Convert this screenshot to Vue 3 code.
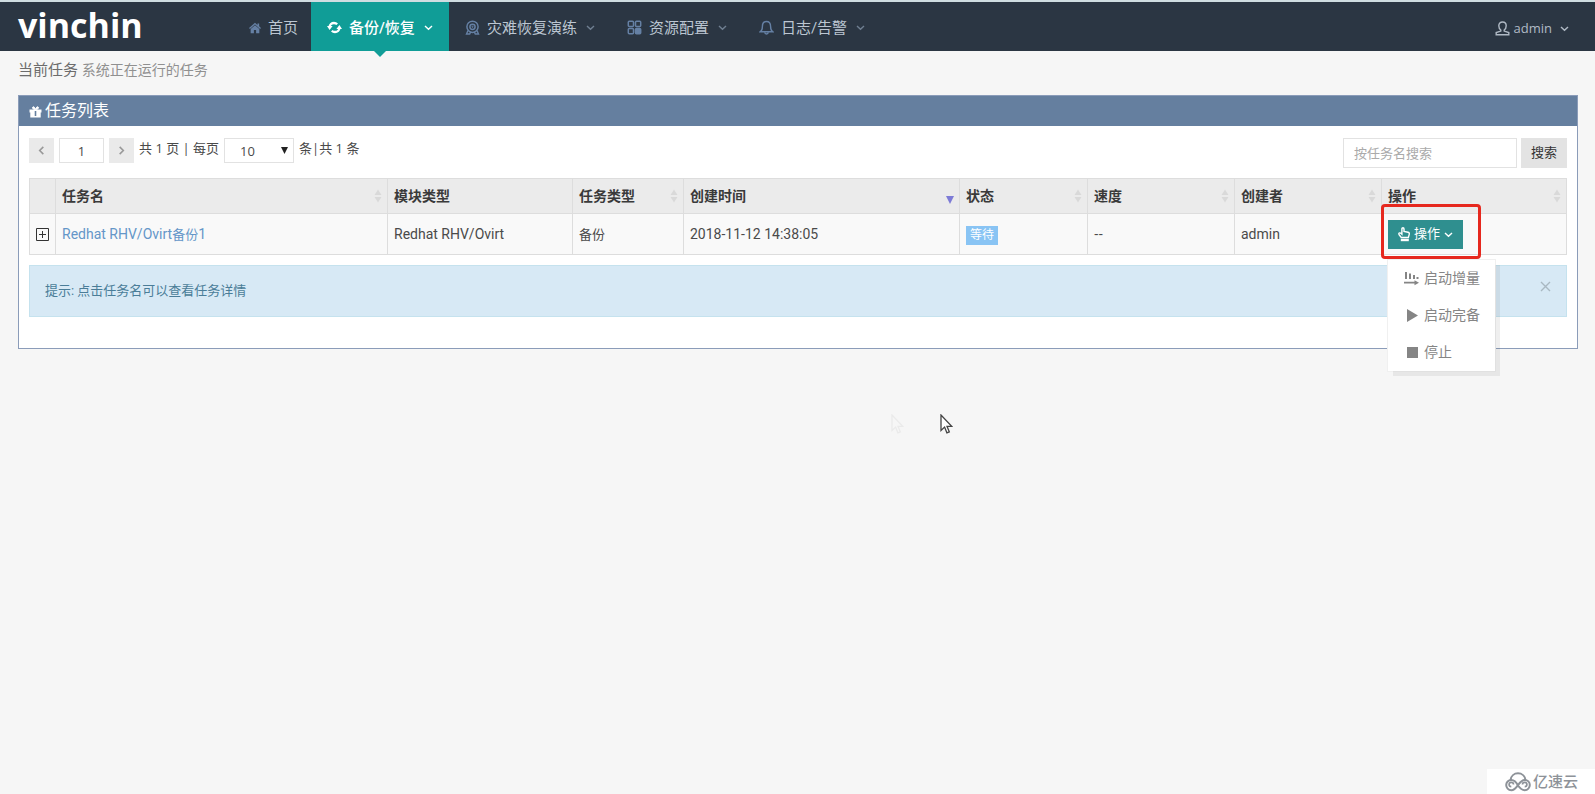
<script setup>
import { ref } from 'vue'

const nav = [
  { label: '首页', icon: 'home', plain: true },
  { label: '备份/恢复', icon: 'sync', active: true },
  { label: '灾难恢复演练', icon: 'target' },
  { label: '资源配置', icon: 'grid' },
  { label: '日志/告警', icon: 'bell' },
]

const columns = [
  { key: 'name', label: '任务名', sort: 'both' },
  { key: 'module', label: '模块类型' },
  { key: 'type', label: '任务类型', sort: 'both' },
  { key: 'created', label: '创建时间', sort: 'desc' },
  { key: 'state', label: '状态', sort: 'both' },
  { key: 'speed', label: '速度', sort: 'both' },
  { key: 'owner', label: '创建者', sort: 'both' },
  { key: 'action', label: '操作', sort: 'both' },
]

const page = ref('1')
const pageSize = ref('10')
const keyword = ref('')
const menuOpen = ref(true)
const tipOpen = ref(true)
</script>

<template>
  <div class="page">
    <header class="topbar">
      <a class="logo" href="#">vinchin</a>
      <nav class="nav">
        <a
          v-for="item in nav"
          :key="item.label"
          href="#"
          class="nav-link"
          :class="{ active: item.active, plain: item.plain }"
        >
          <svg v-if="item.icon === 'home'" class="nav-icon home" viewBox="0 0 13 13">
            <path d="M6.500.8 0 6.500l1 1.100 5.500-4.800L12 7.600l1-1.100-2-1.800V1.500H9.200v1.700z" fill="currentColor" />
            <path d="M1.800 7.700 6.500 3.500l4.700 4.200v4.600H7.700V8.800H5.300v3.500H1.800z" fill="currentColor" />
          </svg>
          <svg v-else-if="item.icon === 'sync'" class="nav-icon" viewBox="0 0 15 15">
            <path d="M2.600 7.300C2.600 4.600 4.700 3 7 3c1.300 0 2.300.4 3.200 1.300" fill="none" stroke="currentColor" stroke-width="2.300" />
            <path d="M12.400 7.700c0 2.700-2.100 4.300-4.400 4.300-1.300 0-2.300-.4-3.200-1.300" fill="none" stroke="currentColor" stroke-width="2.300" />
            <path d="M0 6h5.600L2.600 10zM15 9H9.400l3-4z" fill="currentColor" />
          </svg>
          <svg v-else-if="item.icon === 'target'" class="nav-icon" viewBox="0 0 15 15" fill="none" stroke="currentColor">
            <circle cx="7.500" cy="6.800" r="5.600" stroke-width="1.500" />
            <circle cx="7.500" cy="6.800" r="2.600" stroke-width="1.500" />
            <circle cx="7.500" cy="6.800" r=".6" stroke-width="1" />
            <path d="M3 10.500 1.500 14h3.200l1-2M12 10.500l1.500 3.500h-3.200l-1-2" stroke-width="1.400" />
          </svg>
          <svg v-else-if="item.icon === 'grid'" class="nav-icon" viewBox="0 0 15 15" fill="none" stroke="currentColor" stroke-width="1.500">
            <rect x="1.300" y="1.300" width="5.200" height="5.200" rx="1" />
            <rect x="8.500" y="1.300" width="5.200" height="5.200" rx="1" />
            <rect x="1.300" y="8.500" width="5.200" height="5.200" rx="1" />
            <rect x="8.500" y="8.500" width="5.200" height="5.200" rx="1" fill="currentColor" />
          </svg>
          <svg v-else class="nav-icon" viewBox="0 0 15 15" fill="none" stroke="currentColor" stroke-width="1.400">
            <path d="M1.500 11.700c1.500-1 1.900-2.300 1.900-5.200C3.400 3.600 5 1.500 7.500 1.500s4.100 2.100 4.100 5c0 2.900.4 4.200 1.900 5.200z" />
            <path d="M5.800 12.200c0 2.300 3.400 2.300 3.400 0" />
          </svg>
          <span>{{ item.label }}</span>
          <svg v-if="!item.plain" class="chevron" viewBox="0 0 9 9">
            <path d="M1 3l3.500 3.300L8 3" fill="none" stroke="currentColor" stroke-width="1.400" />
          </svg>
        </a>
      </nav>
      <a class="user" href="#">
        <svg class="user-icon" viewBox="0 0 15 15" fill="none" stroke="currentColor" stroke-width="1.400">
          <path d="M5.800 9C4.300 8 3.800 6.400 3.800 4.800c0-2.300 1.500-3.800 3.700-3.800s3.700 1.500 3.700 3.800c0 1.600-.5 3.200-2 4.200v1.100l4.600 1.500v2.200H1.200v-2.200l4.600-1.500z" />
        </svg>
        <span>admin</span>
        <svg class="chevron" viewBox="0 0 9 9">
          <path d="M1 3l3.500 3.300L8 3" fill="none" stroke="currentColor" stroke-width="1.400" />
        </svg>
      </a>
    </header>

    <main class="main">
      <h1 class="heading">当前任务 <small>系统正在运行的任务</small></h1>

      <section class="panel">
        <h2 class="panel-title">
          <svg class="gift" viewBox="0 0 13 13">
            <path d="M.5 4.500h12v3H.5zM1.300 7h10.400v5.500H1.300z" fill="currentColor" />
            <path d="M6.500 4.500C2.800 4.500 3 1.800 4.500 1.800c1.200 0 2 2.700 2 2.700s.8-2.700 2-2.700c1.500 0 1.700 2.700-2 2.700z" fill="currentColor" stroke="currentColor" />
            <path d="M6.500 6v5" stroke="#657f9f" stroke-width="1.600" />
          </svg>
          任务列表
        </h2>

        <div class="panel-body">
          <div class="toolbar">
            <div class="pager">
              <button class="page-btn" type="button" aria-label="上一页">
                <svg viewBox="0 0 9 9"><path d="M6 1.500 3 4.500l3 3" fill="none" stroke="currentColor" stroke-width="1.300" /></svg>
              </button>
              <input v-model="page" class="page-input" type="text" aria-label="页码" />
              <button class="page-btn" type="button" aria-label="下一页">
                <svg viewBox="0 0 9 9"><path d="m3 1.500 3 3-3 3" fill="none" stroke="currentColor" stroke-width="1.300" /></svg>
              </button>
              <label class="pager-text" for="page-size">共 1 页 | 每页</label>
              <span class="select-wrap">
                <select id="page-size" v-model="pageSize">
                  <option>10</option>
                  <option>20</option>
                  <option>50</option>
                </select>
                <svg class="caret" viewBox="0 0 7 7"><path d="M0 0h7L3.500 7z" fill="#222" /></svg>
              </span>
              <span class="pager-text">条|共 1 条</span>
            </div>
            <form class="search" @submit.prevent>
              <input v-model="keyword" type="text" placeholder="按任务名搜索" aria-label="按任务名搜索" />
              <button type="submit">搜索</button>
            </form>
          </div>

          <table class="tasks">
            <colgroup>
              <col class="w-expand" />
              <col v-for="c in columns" :key="c.key" :class="'w-' + c.key" />
            </colgroup>
            <thead>
              <tr>
                <th aria-label="展开"></th>
                <th v-for="c in columns" :key="c.key">
                  <div class="th">
                    <span>{{ c.label }}</span>
                    <svg v-if="c.sort" class="sort" viewBox="0 0 8 16">
                      <path v-if="c.sort === 'both'" d="M4 1.500 7.500 7h-7zM4 14.500.5 9h7z" fill="#d9d9d9" />
                      <path v-else d="M0 8h8l-4 8z" fill="#7d7bd6" />
                    </svg>
                  </div>
                </th>
              </tr>
            </thead>
            <tbody>
              <tr>
                <td class="expand">
                  <button type="button" aria-label="展开">
                    <svg viewBox="0 0 13 13" fill="none" stroke="#333">
                      <path d="M.5.5h12v12H.5zM3 6.500h7M6.500 3v7" />
                    </svg>
                  </button>
                </td>
                <td><a class="task-link" href="#">Redhat RHV/Ovirt<span class="cn">备份</span>1</a></td>
                <td>Redhat RHV/Ovirt</td>
                <td><span class="cn">备份</span></td>
                <td>2018-11-12 14:38:05</td>
                <td><span class="badge">等待</span></td>
                <td class="speed">--</td>
                <td>admin</td>
                <td>
                  <div class="action">
                    <button class="action-btn" type="button" @click="menuOpen = !menuOpen">
                      <svg class="hand" viewBox="0 0 12 15" fill="none" stroke="currentColor" stroke-width="1.400">
                        <path d="M3.200 10.500C2.600 9.300.8 8 .8 6.800c0-1 1.300-1.300 2.300-.4l.8.700V1.900c0-1.500 2.100-1.500 2.100 0v2.600l4.100.8c1 .2 1.300.8 1.200 1.700-.1 1.300-.8 2.200-.9 3.500z" />
                        <path d="M2.800 13h8" stroke-width="2.400" />
                      </svg>
                      <span>操作</span>
                      <svg class="chevron" viewBox="0 0 9 9">
                        <path d="M1 3l3.500 3.300L8 3" fill="none" stroke="currentColor" stroke-width="1.400" />
                      </svg>
                    </button>
                    <span class="marker"></span>
                    <ul v-if="menuOpen" class="menu">
                      <li>
                        <button type="button">
                          <svg viewBox="0 0 15 15" fill="currentColor">
                            <path d="M1 1h2v7H1zM5 2.500h2V8H5zM9 4h2v4H9zM12.500 6h2v2h-2zM0 10.800h10.500V9.200L15 11.700l-4.500 2.500v-1.600H0z" />
                          </svg>
                          启动增量
                        </button>
                      </li>
                      <li>
                        <button type="button">
                          <svg viewBox="0 0 15 15" fill="currentColor"><path d="M3 1v13l11-6.500z" /></svg>
                          启动完备
                        </button>
                      </li>
                      <li>
                        <button type="button">
                          <svg viewBox="0 0 15 15" fill="currentColor"><path d="M3 2h11v11H3z" /></svg>
                          停止
                        </button>
                      </li>
                    </ul>
                  </div>
                </td>
              </tr>
            </tbody>
          </table>

          <div v-if="tipOpen" class="tip">
            <span>提示: 点击任务名可以查看任务详情</span>
            <button type="button" aria-label="关闭" @click="tipOpen = false">
              <svg viewBox="0 0 11 11"><path d="m1 1 9 9M10 1l-9 9" stroke="currentColor" stroke-width="1.400" /></svg>
            </button>
          </div>
        </div>
      </section>
    </main>

    <svg class="cursor ghost" viewBox="0 0 13 21">
      <path d="M1 1v15.500l3.600-3.400 2.300 5.700 2.400-1-2.300-5.500h4.700z" />
    </svg>
    <svg class="cursor" viewBox="0 0 13 21">
      <path d="M1 1v15.500l3.600-3.400 2.300 5.700 2.400-1-2.300-5.500h4.700z" />
    </svg>

    <div class="watermark">
      <svg viewBox="0 0 26 20" fill="none" stroke="currentColor" stroke-width="2">
        <path d="M5.500 8C6 4 9.200 1.300 13 1.300S20 4 20.500 8" />
        <path d="M17.500 12.500a2.200 2.200 0 1 1 2.200 2.200M8.500 12.500a2.200 2.200 0 1 0-2.200 2.200" stroke-width="1.700" />
        <path d="M13 13.500C11 9.500 9 8 6.300 8 3.300 8 1.200 10.300 1.200 13s2.100 5.200 5.100 5.200c6.200 0 7.200-10.200 13.400-10.200 3 0 5.100 2.300 5.100 5s-2.100 5.200-5.100 5.200c-3 0-4.700-1.800-6.700-4.700" />
      </svg>
      <span>亿速云</span>
    </div>
  </div>
</template>

<style>
body {
  background: #f6f6f6;
}
</style>

<style scoped>
* {
  box-sizing: border-box;
}

.page {
  position: relative;
  min-height: 100vh;
  border-top: 2px solid #cfdde1;
  background: #f6f6f6;
  color: #4a4a4a;
  font-family: Roboto, "Noto Sans CJK SC", sans-serif;
  font-size: 14px;
  line-height: 20px;
}

a {
  text-decoration: none;
}

button,
input,
select {
  margin: 0;
  padding: 0;
  border: 0;
  border-radius: 0;
  font: inherit;
  color: inherit;
}

svg {
  display: block;
  flex: none;
}

.topbar {
  display: flex;
  align-items: stretch;
  height: 49px;
  padding: 0 26px 0 18px;
  background: #2b3643;
}

.logo {
  width: 215px;
  color: #fff;
  font-family: "Open Sans", sans-serif;
  font-size: 34px;
  font-weight: 700;
  line-height: 46px;
}

.nav {
  display: flex;
  flex: 1;
}

.nav-link {
  position: relative;
  display: flex;
  align-items: center;
  padding: 2px 16px 0;
  color: #bcc6d2;
  font-size: 15px;
}

.nav-link.plain {
  padding-right: 13px;
}

.nav-link.active {
  background: #109d97;
  color: #fff;
  font-weight: 500;
}

.nav-link.active::after {
  content: "";
  position: absolute;
  top: 100%;
  left: 50%;
  margin-left: -6px;
  border: 6px solid transparent;
  border-top-color: #109d97;
  border-bottom: 0;
}

.nav-icon {
  width: 15px;
  height: 15px;
  margin-right: 7px;
  color: #6580a4;
}

.nav-icon.home {
  width: 12px;
  height: 12px;
}

.chevron {
  width: 9px;
  height: 9px;
}

.nav-link .chevron {
  margin-left: 9px;
  color: #6f7f91;
}

.nav-link.active .nav-icon,
.nav-link.active .chevron {
  color: #fff;
}

.user {
  display: flex;
  align-items: center;
  gap: 4px;
  padding-top: 3px;
  color: #b0bac5;
  font-family: "Open Sans", "Noto Sans CJK SC", sans-serif;
  font-size: 13px;
}

.user-icon {
  width: 15px;
  height: 15px;
}

.user .chevron {
  margin-left: 4px;
}

.main {
  padding: 7px 17px 0 18px;
}

.heading {
  margin: 0 0 13px;
  color: #6c6c6c;
  font-size: 15px;
  font-weight: 400;
  line-height: 24px;
}

.heading small {
  color: #909090;
  font-size: 14px;
}

.panel {
  border: 1px solid #8b9cb9;
  background: #fff;
}

.panel-title {
  display: flex;
  align-items: center;
  gap: 3px;
  height: 30px;
  margin: 0;
  padding-left: 10px;
  background: #657f9f;
  color: #fff;
  font-size: 16px;
  font-weight: 400;
}

.gift {
  width: 13px;
  height: 13px;
}

.panel-body {
  padding: 12px 10px 31px;
}

.toolbar {
  display: flex;
  align-items: flex-start;
  justify-content: space-between;
  margin-bottom: 10px;
}

.pager {
  display: flex;
  gap: 5px;
  font-family: "Open Sans", "Noto Sans CJK SC", sans-serif;
  font-size: 13px;
}

.page-btn {
  display: flex;
  align-items: center;
  justify-content: center;
  width: 25px;
  height: 25px;
  background: #eaeaea;
  color: #999;
}

.page-btn svg {
  width: 11px;
  height: 11px;
}

.page-input {
  width: 45px;
  height: 25px;
  border: 1px solid #e2e2e2;
  background: #fff;
  text-align: center;
}

.select-wrap {
  position: relative;
}

.select-wrap select {
  width: 70px;
  height: 25px;
  padding-left: 15px;
  border: 1px solid #e2e2e2;
  background: #fff;
  appearance: none;
}

.caret {
  position: absolute;
  top: 9px;
  right: 6px;
  width: 7px;
  height: 7px;
  pointer-events: none;
}

.search {
  display: flex;
  gap: 4px;
  font-size: 13px;
}

.search input {
  width: 174px;
  height: 30px;
  padding: 0 10px;
  border: 1px solid #e2e2e2;
  background: #fff;
}

.search input::placeholder {
  color: #aaa;
}

.search button {
  width: 46px;
  height: 30px;
  background: #e3e3e3;
  color: #333;
}

.tasks {
  width: 100%;
  border-collapse: collapse;
  table-layout: fixed;
}

.w-expand {
  width: 26px;
}

.w-module,
.w-action {
  width: 185px;
}

.w-type {
  width: 111px;
}

.w-created {
  width: 276px;
}

.w-state {
  width: 128px;
}

.w-speed,
.w-owner {
  width: 147px;
}

.tasks th,
.tasks td {
  padding: 0 5px 0 6px;
  border: 1px solid #ddd;
  text-align: left;
}

.tasks th {
  height: 35px;
  background: #ebebeb;
  color: #3a3a3a;
  font-weight: 700;
}

.tasks td {
  height: 41px;
  background: #f9f9f9;
}

.tasks .speed {
  font-family: "Open Sans", sans-serif;
}

.th {
  display: flex;
  align-items: center;
  justify-content: space-between;
}

.sort {
  width: 8px;
  height: 16px;
}

.tasks .expand {
  padding: 0;
}

.expand button {
  display: block;
  margin: 0 auto;
  background: none;
}

.expand svg {
  width: 13px;
  height: 13px;
}

.cn {
  font-size: 13px;
}

.task-link {
  color: #6496c8;
}

.badge {
  display: inline-block;
  padding: 0 4px;
  background: #89c4f4;
  color: #fff;
  font-size: 12px;
  line-height: 19px;
}

.action {
  position: relative;
  width: 75px;
}

.action-btn {
  display: flex;
  align-items: center;
  justify-content: center;
  gap: 4px;
  width: 75px;
  height: 29px;
  background: #2f8f8f;
  color: #fff;
  font-size: 13px;
}

.hand {
  width: 12px;
  height: 15px;
}

.marker {
  position: absolute;
  inset: -16px -18px -10px -7px;
  border: 3px solid #e6281e;
  border-radius: 4px;
  pointer-events: none;
}

.menu {
  position: absolute;
  top: 40px;
  left: 0;
  width: 107px;
  margin: 0;
  padding: 0;
  background: #fff;
  box-shadow: 5px 5px rgba(102, 102, 102, 0.1), 0 0 0 1px #f0f0f0;
  list-style: none;
}

.menu button {
  display: flex;
  align-items: center;
  gap: 5px;
  width: 100%;
  height: 37px;
  padding-left: 16px;
  background: none;
  color: #858585;
}

.menu svg {
  width: 15px;
  height: 15px;
}

.tip {
  display: flex;
  align-items: flex-start;
  justify-content: space-between;
  margin-top: 10px;
  padding: 15px;
  border: 1px solid #c5e2ee;
  background: #d7e9f5;
  color: #4a7d98;
  font-size: 13px;
}

.tip button {
  background: none;
  color: #a9b8c2;
}

.tip svg {
  width: 11px;
  height: 11px;
}

.cursor {
  position: absolute;
  top: 412px;
  left: 940px;
  width: 13px;
  height: 21px;
  fill: #fff;
  stroke: #444;
  stroke-width: 1.3;
}

.cursor.ghost {
  left: 891px;
  opacity: 0.06;
}

.watermark {
  position: absolute;
  right: 0;
  bottom: 0;
  display: flex;
  align-items: center;
  gap: 2px;
  height: 25px;
  padding: 0 17px 0 18px;
  background: #fff;
  color: #8d9298;
  font-size: 15px;
  font-weight: 500;
}

.watermark svg {
  width: 26px;
  height: 20px;
}
</style>
